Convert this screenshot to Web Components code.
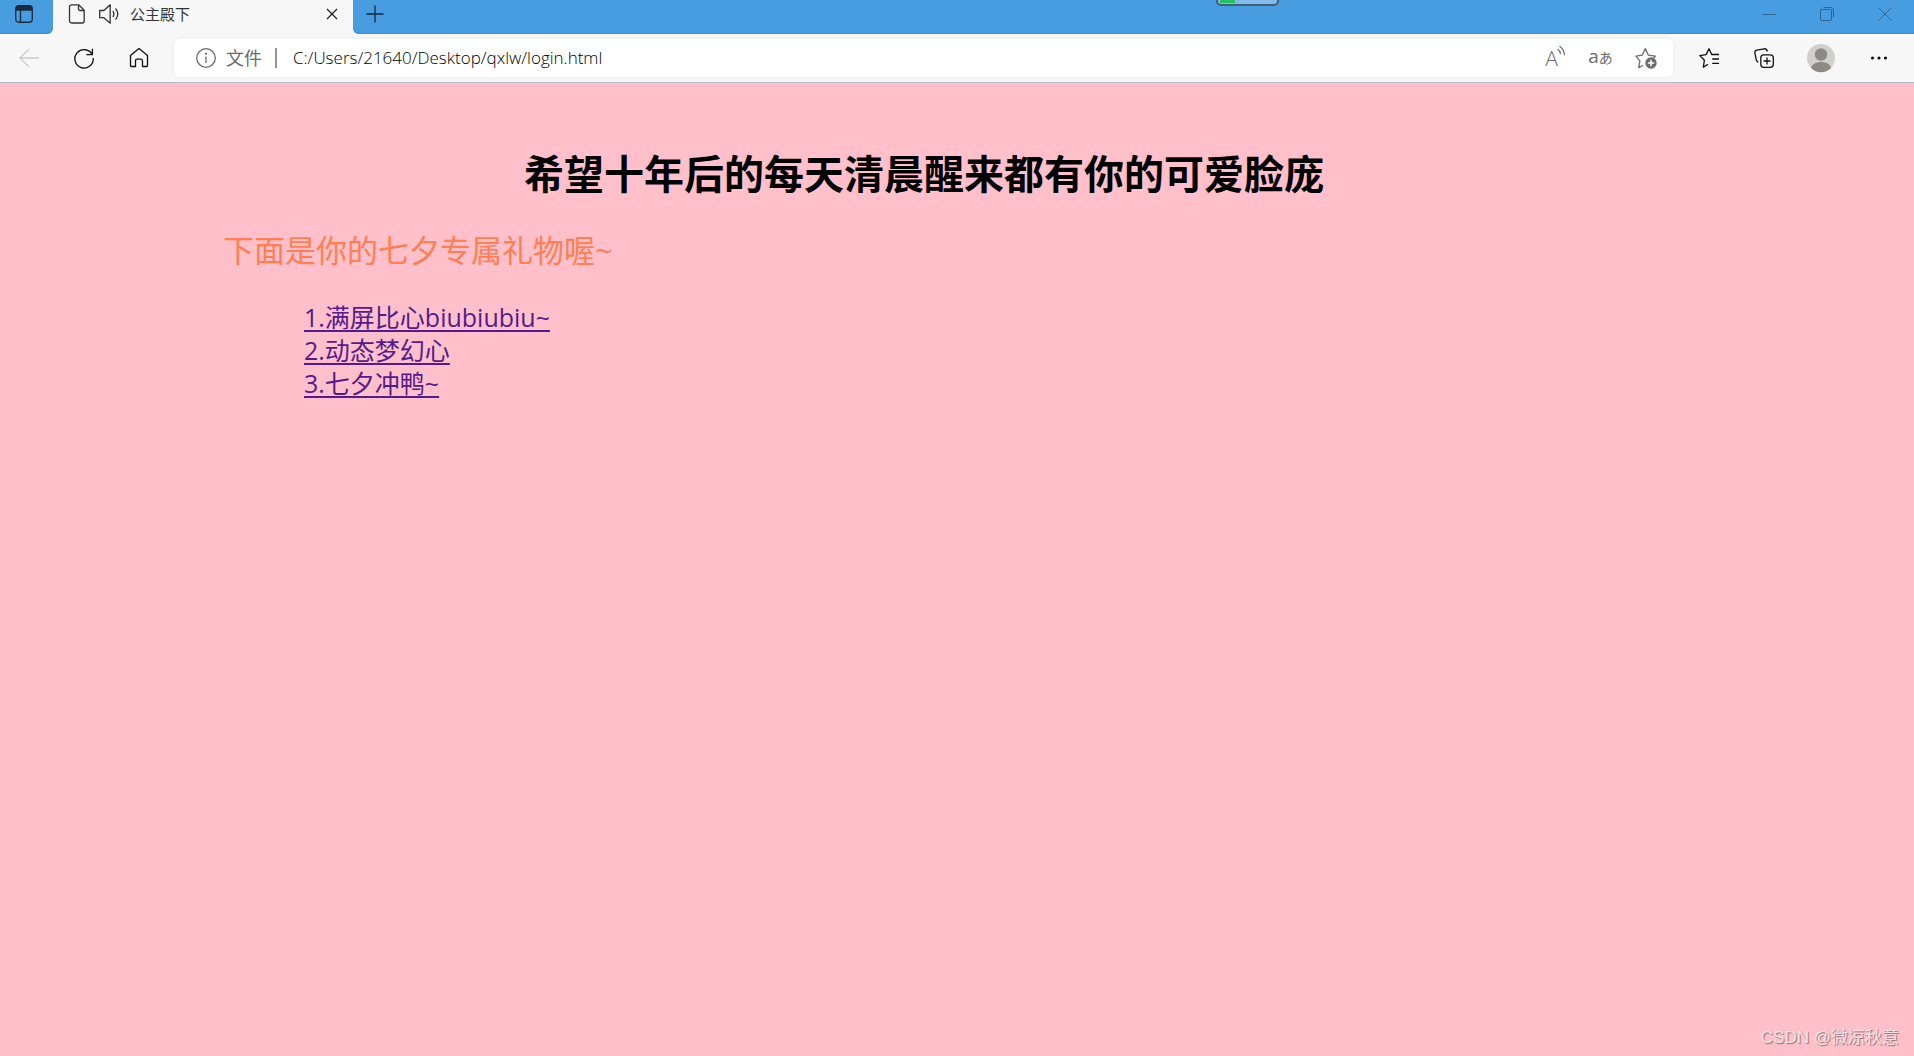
<!DOCTYPE html>
<html lang="zh-CN">
<head>
<meta charset="utf-8">
<title>公主殿下</title>
<style>
html, body { height: 100%; margin: 0; }
body { font-family: "Open Sans", "Noto Sans CJK SC", sans-serif; }
</style>
</head>
<body>
<browser-window>
  <tab-strip slot="tabs"><span>公主殿下</span></tab-strip>
  <tool-bar slot="tools" address="C:/Users/21640/Desktop/qxlw/login.html"></tool-bar>
  <gift-page>
    <span slot="title">希望十年后的每天清晨醒来都有你的可爱脸庞</span>
    <span slot="intro">下面是你的七夕专属礼物喔~</span>
    <gift-link href="#hearts">1.满屏比心biubiubiu~</gift-link>
    <gift-link href="#dream">2.动态梦幻心</gift-link>
    <gift-link href="#duck">3.七夕冲鸭~</gift-link>
  </gift-page>
  <water-mark slot="mark">CSDN @微凉秋意</water-mark>
</browser-window>
<script>
const define = (name, html, setup) => {
  const template = document.createElement('template');
  template.innerHTML = html;
  customElements.define(name, class extends HTMLElement {
    constructor() {
      super();
      this.attachShadow({ mode: 'open' }).append(template.content.cloneNode(true));
    }
    connectedCallback() { if (setup) setup(this, this.shadowRoot); }
  });
};

const icons = {
  tabs: [18, '<rect x=".75" y=".75" width="16.5" height="16.5" rx="3"/><path d="M5.5 5v12"/><path d="M1 5V3.5A2.7 2.7 0 0 1 3.700 1h10.600A2.700 2.700 0 0 1 17 3.500V5z" fill="currentColor"/>'],
  file: [20, '<path d="M3.500.8h7.200l5.500 5.500v10.700a2 2 0 0 1-2 2H3.500a2 2 0 0 1-2-2V2.800a2 2 0 0 1 2-2zM10.500 1v4a1.500 1.500 0 0 0 1.500 1.500h4"/>'],
  sound: [20, '<path d="M.7 6.500h4.200L11.200.8v18.400L4.900 13.700H.7zM14 7q1.700 3 0 6M16.500 4.500q4.500 5.500 0 11"/>'],
  close: [12, '<path d="M1 1l10 10M11 1L1 11"/>'],
  plus: [18, '<path d="M9 .5v17M.5 9h17"/>'],
  minimise: [14, '<path d="M.5 7.500h13" stroke-width="1"/>'],
  restore: [14, '<g stroke-width="1"><rect x=".5" y="2.500" width="11" height="11" rx="1.500"/><path d="M3.500.5H11a2.500 2.500 0 0 1 2.500 2.500v7.500"/></g>'],
  shut: [14, '<path d="M.5.5l13 13M13.500.5l-13 13" stroke-width="1"/>'],
  back: [20, '<path d="M20 10H.8M10 1.300L.8 10 10 18.700"/>'],
  reload: [20, '<path d="M18.400 7a9.200 9.200 0 1 0 .8 3M18.400.7v6h-6"/>'],
  home: [20, '<path d="M1.500 8L10 1l8.500 7v10.200a.8.8 0 0 1-.8.8h-4.200v-5.800a1.500 1.500 0 0 0-1.500-1.500h-4a1.500 1.500 0 0 0-1.500 1.500V19H2.300a.8.8 0 0 1-.8-.8z" transform="translate(0 -.5)"/>'],
  info: [20, '<circle cx="10" cy="10" r="9.300"/><path d="M10 8.500v6.500"/><circle cx="10" cy="5.800" r=".5" fill="currentColor"/>'],
  waves: [8, '<path d="M-.5 3q2.500 1.500 3 5M1.500.2q4.500 3 5 9"/>'],
  addstar: [22, '<path d="M8 18.200l-4.300 2.500 1.200-6.800L.9 9.200l6.300-1L10.300 1.500l3 6.600 7 1.100-2 2"/><circle cx="16" cy="16" r="5.700" fill="currentColor" stroke="none"/><path d="M16 12.800v6.400M12.800 16h6.400" stroke="#fff" stroke-width="1.500"/>'],
  favourites: [20, '<path d="M9 16.300l-4.700 2.800 1.100-6.900L.8 7.600l6.300-1L10 .8l2.700 5.700H20M13.200 11H20M13.200 15.300H20"/>'],
  collections: [20, '<rect x="6.800" y="6.800" width="12.500" height="12.500" rx="3"/><path d="M13 9.500v7M9.500 13h7M4.300 14.300Q2.800 13.600 2.300 12L.9 5.200Q.5 2.800 2.800 2.200L10.200.8Q12.600.5 13.400 3.500"/>'],
  avatar: [28, '<circle cx="14" cy="14" r="14" fill="#d2d0ce" stroke="none"/><circle cx="14" cy="10.500" r="6.200" fill="#8d8985" stroke="none"/><path d="M4 24c1.500-8 18.500-8 20 0a14 14 0 0 1-20 0z" fill="#8d8985" stroke="none"/>'],
  more: [18, '<g fill="currentColor" stroke="none"><circle cx="2.500" cy="9" r="1.600"/><circle cx="9" cy="9" r="1.600"/><circle cx="15.500" cy="9" r="1.600"/></g>']
};

define('line-icon', `<style>
:host { display: block; flex: none; }
svg { display: block; fill: none; stroke: currentColor; stroke-width: 1.3; stroke-linejoin: round; overflow: visible; }
</style><svg aria-hidden="true"></svg>`, (el, root) => {
  const [size, shapes] = icons[el.getAttribute('name')];
  const svg = root.querySelector('svg');
  svg.setAttribute('width', size);
  svg.setAttribute('height', size);
  svg.setAttribute('viewBox', `0 0 ${size} ${size}`);
  svg.innerHTML = shapes;
});

const buttonReset = `button { display: flex; align-items: center; justify-content: center; flex: none;
  padding: 0; border: 0; background: none; color: inherit; font: inherit; }`;

define('browser-window', `<style>
:host { display: flex; flex-direction: column; min-height: 100%; position: relative; background: #f7f7f7; }
header { border-bottom: 1px solid #b9bcbc; }
.meter { position: absolute; top: -12px; left: 63.55%; width: 59px; height: 14px; border: 2px solid #3f5f7c; border-radius: 5px; background: #85bbea; overflow: hidden; }
.meter i { display: block; width: 15px; height: 13px; margin-left: 2px; background: #27c069; }
main { flex: 1; display: flex; }
</style>
<header><slot name="tabs"></slot><slot name="tools"></slot></header>
<div class="meter"><i></i></div>
<main><slot></slot></main><slot name="mark"></slot>`);

define('tab-strip', `<style>
:host { display: flex; height: 34px; color: #222; font-size: 15px; line-height: 20px; }
${buttonReset}
.blue { background: #489de1; box-shadow: inset 0 -1px 1px #3e8acb; display: flex; }
.menu { width: 53px; border-radius: 0 0 6px 0; color: #182b3b; padding: 0 6px 6px 0; box-sizing: border-box; justify-content: center; }
.tab { width: 300px; box-sizing: border-box; padding: 0 15px 6px; display: flex; align-items: center; }
.label { flex: 1; gap: 11px; justify-content: flex-start; color: #333; }
.rest { flex: 1; border-radius: 0 0 0 6px; padding-bottom: 7px; color: #10283c; }
.new { width: 43px; }
.gap { flex: 1; }
.win { width: 58px; color: #2f648e; }
</style>
<div class="blue menu"><button aria-label="标签操作"><line-icon name="tabs"></line-icon></button></div>
<div class="tab"><button class="label"><line-icon name="file"></line-icon><line-icon name="sound"></line-icon><slot></slot></button>
<button aria-label="关闭标签页"><line-icon name="close"></line-icon></button></div>
<div class="blue rest"><button class="new" aria-label="新标签页"><line-icon name="plus"></line-icon></button><span class="gap"></span>
<button class="win" aria-label="最小化"><line-icon name="minimise"></line-icon></button>
<button class="win" aria-label="还原"><line-icon name="restore"></line-icon></button>
<button class="win" aria-label="关闭"><line-icon name="shut"></line-icon></button></div>`);

define('tool-bar', `<style>
:host { display: flex; align-items: center; height: 48px; padding: 0 8px 0 1px; color: #111; }
${buttonReset}
button { width: 55px; height: 38px; }
.off { color: #ccc; }
.user { width: 60px; }
form { flex: 1; display: flex; align-items: center; height: 38px; margin: 0 8px; padding: 0 5px 0 22px; box-sizing: border-box; border-radius: 6px; background: #fff; box-shadow: 0 0 5px #0000000d; color: #6b6b6b; font-size: 18px; min-width: 0; }
label { display: flex; align-items: center; gap: 10px; white-space: nowrap; line-height: 24px; padding-bottom: 1px; }
label::after { content: ""; width: 2px; height: 20px; margin-left: 3px; background: #949494; }
input { flex: 1; min-width: 0; border: 0; padding: 0 0 1px 16px; outline: 0; background: none; color: #000; font: 350 17px "Open Sans", sans-serif; }
form button { width: 45px; }
.read { align-items: flex-start; padding-top: 7px; box-sizing: border-box; font: 350 21px/24px "Open Sans", sans-serif; }
.lang { font: 19px/24px "Open Sans", "Noto Sans CJK JP", sans-serif; padding-bottom: 2px; }
.lang small { font-size: 14px; }
</style>
<button class="off" aria-label="返回"><line-icon name="back"></line-icon></button>
<button aria-label="刷新"><line-icon name="reload"></line-icon></button>
<button aria-label="主页"><line-icon name="home"></line-icon></button>
<form><label for="url"><line-icon name="info"></line-icon>文件</label><input id="url" spellcheck="false">
<button type="button" class="read">A<line-icon name="waves"></line-icon></button>
<button type="button" class="lang"><span>a<small>あ</small></span></button>
<button type="button" aria-label="添加到收藏夹"><line-icon name="addstar"></line-icon></button></form>
<button aria-label="收藏夹"><line-icon name="favourites"></line-icon></button>
<button aria-label="集锦"><line-icon name="collections"></line-icon></button>
<button class="user" aria-label="个人资料"><line-icon name="avatar"></line-icon></button>
<button aria-label="设置及其他"><line-icon name="more"></line-icon></button>`, (el, root) => {
  root.querySelector('input').value = el.getAttribute('address');
});

define('gift-page', `<style>
:host { display: block; flex: 1; box-sizing: border-box; padding: 64px 289px 40px 223px; background: pink; }
h1 { margin: 0; font-size: 40px; line-height: 54px; text-align: center; }
p { margin: 28px 0 30px; font-size: 31px; line-height: 42px; color: coral; }
nav { display: flex; flex-direction: column; align-items: flex-start; padding-left: 81px; }
</style>
<h1><slot name="title"></slot></h1><p><slot name="intro"></slot></p><nav><slot></slot></nav>`);

define('gift-link', `<style>
:host { display: block; font-size: 25px; line-height: 33px; }
a { color: #551a8b; text-decoration: underline 2px; text-underline-offset: 3px; text-decoration-skip-ink: none; }
</style><a><slot></slot></a>`, (el, root) => {
  root.querySelector('a').href = el.getAttribute('href');
});

define('water-mark', `<style>
:host { position: absolute; right: 15px; bottom: 6px; font: 17px/24px "Liberation Sans", "Noto Sans CJK SC", sans-serif; color: #f5e4e7; text-shadow: 1px 1px 1px #8b6c72; }
</style><slot></slot>`);
</script>
</body>
</html>
